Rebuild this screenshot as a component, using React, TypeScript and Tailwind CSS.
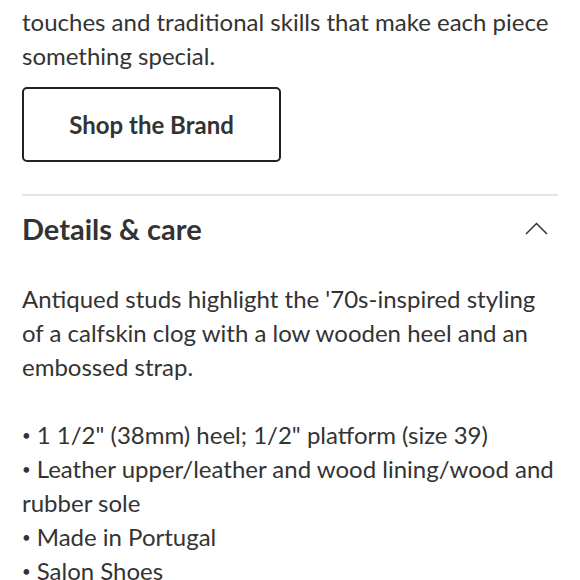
function Bullet() {
  return <span className="text-[15px] align-[3px] mr-[6px]">•</span>;
}

export default function App() {
  return (
    <div className="w-[580px] h-[580px] overflow-hidden bg-white px-[22px] text-[#333333] font-['Lato',sans-serif]">
      <p className="text-[24px] leading-[34px] pt-[5px]">
        touches and traditional skills that make each piece something special.
      </p>

      <button className="mt-[14px] w-[259px] h-[75px] border-2 border-[#222222] rounded-[5px] text-[24px] font-bold text-[#333333]">
        Shop the Brand
      </button>

      <div className="mt-[32px] h-[2px] bg-[#e5e5e5]" />

      <div className="flex items-center justify-between h-[66px]">
        <h2 className="text-[29px] font-bold">Details &amp; care</h2>
        <svg width="23" height="13" viewBox="0 0 23 13" fill="none" stroke="#333333" strokeWidth="1.5" className="mr-[10px] mt-[-2px]">
          <polyline points="1,12 11.5,1.5 22,12" />
        </svg>
      </div>

      <div className="text-[24px] leading-[34px] mt-[20px]">
        <p>
          Antiqued studs highlight the '70s-inspired styling of a calfskin clog with a low wooden heel and an embossed strap.
        </p>
        <ul className="mt-[34px]">
          <li><Bullet />1 1/2" (38mm) heel; 1/2" platform (size 39)</li>
          <li><Bullet />Leather upper/leather and wood lining/wood and rubber sole</li>
          <li><Bullet />Made in Portugal</li>
          <li><Bullet />Salon Shoes</li>
        </ul>
      </div>
    </div>
  );
}
